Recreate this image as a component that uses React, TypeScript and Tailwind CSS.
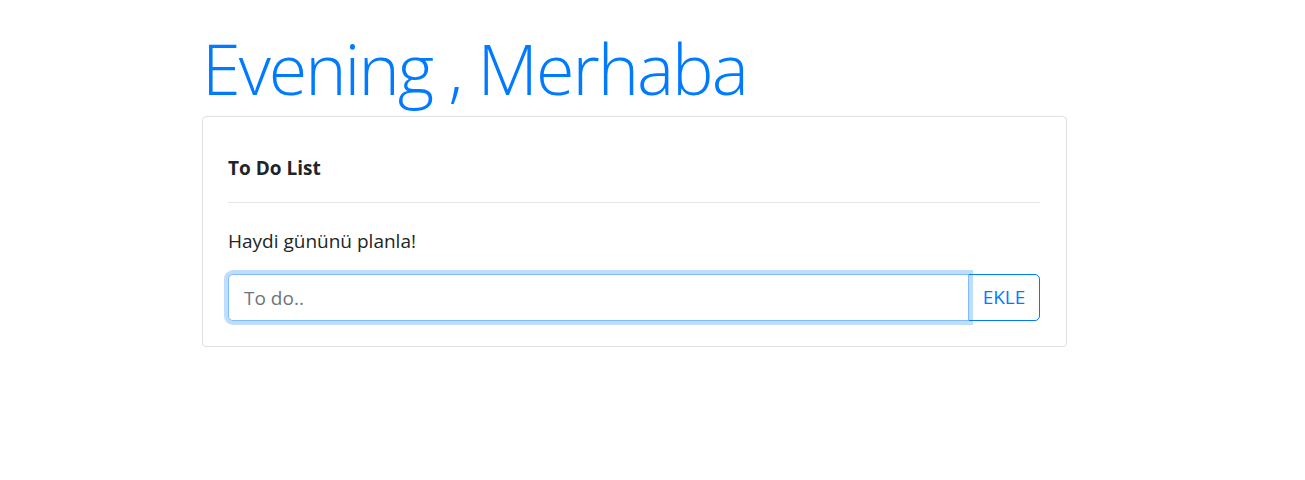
import React from "react";

export default function App() {
  return (
    <div className="min-h-[480px] bg-white" style={{ fontFamily: '"Open Sans", "Noto Sans", sans-serif' }}>
      <div className="ml-[202px] w-[865px] pt-[25px]">
        <h1 className="text-[70px] leading-[86px] font-light text-[#007bff] tracking-[-2px]">Evening , Merhaba</h1>
        <div className="mt-[5px] border border-[rgba(0,0,0,0.125)] rounded-[4px] pl-[25px] pr-[26px] pt-[39px] pb-[25px]">
          <div className="text-[19px] leading-[24px] font-bold text-[#212529]">To Do List</div>
          <div className="mt-[22px] border-t border-[rgba(0,0,0,0.1)]"></div>
          <p className="mt-[25px] text-[19px] leading-[26px] text-[#212529]">Haydi gününü planla!</p>
          <div className="mt-[20px] flex">
            <input
              autoFocus
              placeholder="To do.."
              className="relative z-10 flex-1 h-[47px] px-[15px] text-[19px] text-[#495057] placeholder:text-[#6c757d] border border-[#80bdff] rounded-l-[5px] outline-none shadow-[0_0_0_4px_rgba(0,123,255,0.25)] bg-white"
            />
            <button className="h-[47px] w-[72px] -ml-px border border-[#007bff] rounded-r-[5px] text-[19px] text-[#007bff] bg-white">
              EKLE
            </button>
          </div>
        </div>
      </div>
    </div>
  );
}
